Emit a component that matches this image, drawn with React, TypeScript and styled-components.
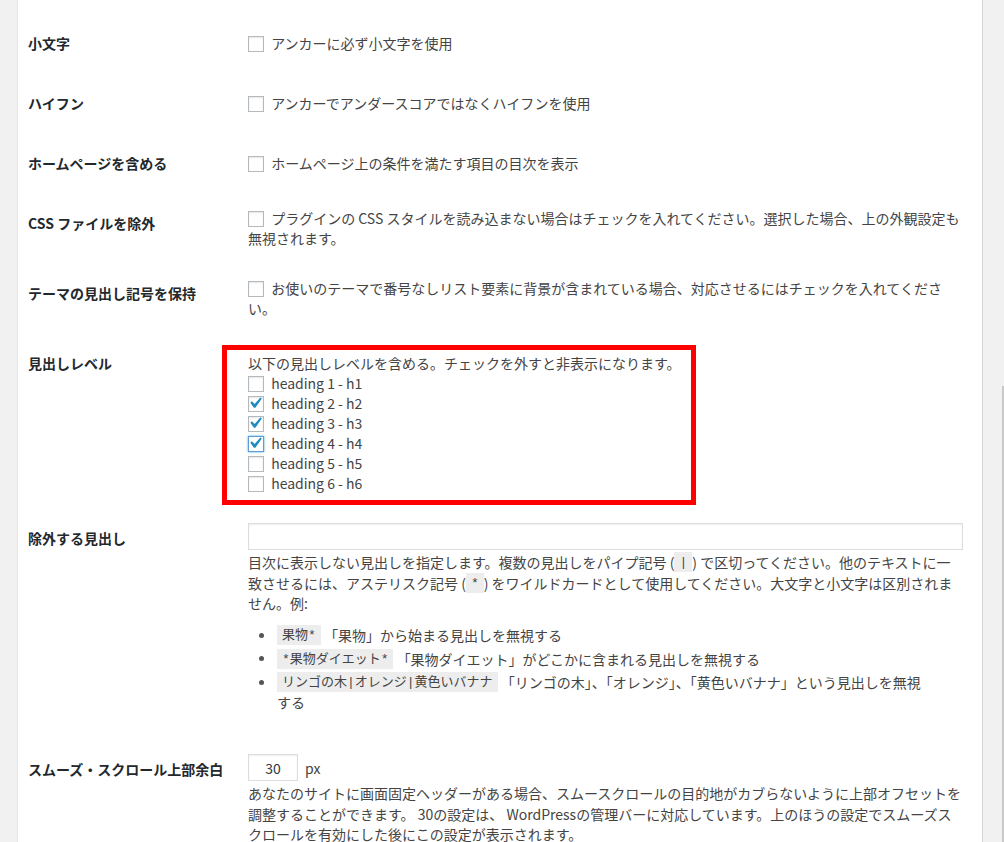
import React from "react";
import styled, { createGlobalStyle } from "styled-components";

const GlobalStyle = createGlobalStyle`
  html, body {
    margin: 0;
    padding: 0;
    height: 842px;
    overflow: hidden;
    background: #f1f1f1;
  }
  body {
    font-family: "Noto Sans CJK JP", "Noto Sans", sans-serif;
    font-size: 14px;
    color: #444;
  }
`;

const Shell = styled.div`
  display: flex;
  height: 842px;
`;

const LeftGutter = styled.div`
  flex: none;
  width: 17px;
  background: #f1f1f1;
  border-right: 1px solid #e5e5e5;
`;

const Panel = styled.main`
  flex: 1;
  background: #fff;
  padding: 13px 19px 0 10px;
  overflow: hidden;
`;

const RightGutter = styled.div`
  flex: none;
  width: 21px;
  background: #f1f1f1;
  border-left: 1px solid #d5d5d5;
  display: flex;
  justify-content: flex-end;
`;

const ScrollEdge = styled.div`
  width: 2px;
  margin-top: 386px;
  background: #c8c8c8;
`;

const Row = styled.div`
  display: grid;
  grid-template-columns: 220px 715px;
`;

const Th = styled.div<{ $top?: number }>`
  padding: ${(p) => p.$top ?? 20}px 0 20px;
  line-height: 20px;
  font-weight: 700;
  color: #23282d;
  white-space: nowrap;
`;

const Td = styled.div<{ $pad?: string; $align?: string }>`
  align-self: ${(p) => p.$align ?? "center"};
  padding: ${(p) => p.$pad ?? "15px 0"};
  line-height: 20px;
  white-space: nowrap;
  position: relative;
`;

const Box = styled.span<{ $checked?: boolean; $focus?: boolean }>`
  display: inline-block;
  position: relative;
  box-sizing: border-box;
  width: 16px;
  height: 16px;
  margin: -3px 4px 0 0;
  vertical-align: middle;
  background: #fff;
  border: 1px solid ${(p) => (p.$focus ? "#5b9dd9" : "#b4b9be")};
  box-shadow: ${(p) =>
    p.$focus
      ? "0 0 2px rgba(30, 140, 190, 0.8)"
      : "inset 0 1px 2px rgba(0, 0, 0, 0.1)"};
  svg {
    position: absolute;
    left: -5px;
    top: -4.5px;
    width: 22px;
    height: 22px;
  }
`;

const Check = ({ checked, focus }: { checked?: boolean; focus?: boolean }) => (
  <Box $checked={checked} $focus={focus}>
    {checked && (
      <svg viewBox="0 0 20 20">
        <path
          fill="#1e8cbe"
          d="M14.83 4.89l1.34.94-5.81 8.38H9.02L5.78 9.67l1.34-1.25 2.57 2.4z"
        />
      </svg>
    )}
  </Box>
);

const Label = styled.label`
  cursor: default;
`;

const Fieldset = styled.div`
  position: relative;
  line-height: 20px;
`;

const Annotation = styled.div`
  position: absolute;
  left: -26px;
  top: -8px;
  width: 474px;
  height: 160px;
  box-sizing: border-box;
  border: 5px solid #ff0000;
  pointer-events: none;
`;

const Input = styled.input<{ $w: number; $center?: boolean }>`
  display: block;
  box-sizing: border-box;
  width: ${(p) => p.$w}px;
  height: 27px;
  margin: 0;
  padding: 3px 5px;
  border: 1px solid #ddd;
  box-shadow: inset 0 1px 2px rgba(0, 0, 0, 0.07);
  background: #fff;
  color: #32373c;
  font-family: "Noto Sans CJK JP", "Noto Sans", sans-serif;
  font-size: 14px;
  text-align: ${(p) => (p.$center ? "center" : "left")};
  outline: none;
`;

const FieldLine = styled.div`
  display: flex;
  align-items: center;
  gap: 7px;
`;

const Unit = styled.span`
  line-height: 20px;
`;

const Desc = styled.p`
  margin: 2px 0 0;
  line-height: 20.5px;
`;

const Code = styled.code`
  display: inline-block;
  vertical-align: top;
  font-family: "Liberation Mono", "Noto Sans CJK JP", monospace;
  font-size: 13px;
  line-height: 15px;
  padding: 3px 5px 2px;
  background: rgba(0, 0, 0, 0.07);
  color: #444;
`;

const List = styled.ul`
  margin: 11.5px 0 12px;
  padding: 0;
  list-style: none;
`;

const Item = styled.li`
  position: relative;
  padding-left: 29px;
  line-height: 20px;
  margin-bottom: 3.5px;
  &:last-child {
    margin-bottom: 0;
  }
  &::before {
    content: "";
    position: absolute;
    left: 11px;
    top: 7.5px;
    width: 5px;
    height: 5px;
    border-radius: 50%;
    background: #555;
  }
`;

const headings = [
  { n: 1, checked: false },
  { n: 2, checked: true },
  { n: 3, checked: true },
  { n: 4, checked: true, focus: true },
  { n: 5, checked: false },
  { n: 6, checked: false },
];

export default function App() {
  return (
    <>
      <GlobalStyle />
      <Shell>
        <LeftGutter />
        <Panel>
          <Row>
            <Th>小文字</Th>
            <Td>
              <Label>
                <Check /> アンカーに必ず小文字を使用
              </Label>
            </Td>
          </Row>
          <Row>
            <Th>ハイフン</Th>
            <Td>
              <Label>
                <Check /> アンカーでアンダースコアではなくハイフンを使用
              </Label>
            </Td>
          </Row>
          <Row>
            <Th>ホームページを含める</Th>
            <Td>
              <Label>
                <Check /> ホームページ上の条件を満たす項目の目次を表示
              </Label>
            </Td>
          </Row>
          <Row>
            <Th>CSS ファイルを除外</Th>
            <Td>
              <Label>
                <Check />{" "}
                プラグインの CSS スタイルを読み込まない場合はチェックを入れてください。選択した場合、上の外観設定も
                <br />
                無視されます。
              </Label>
            </Td>
          </Row>
          <Row>
            <Th>テーマの見出し記号を保持</Th>
            <Td>
              <Label>
                <Check />{" "}
                お使いのテーマで番号なしリスト要素に背景が含まれている場合、対応させるにはチェックを入れてくださ
                <br />
                い。
              </Label>
            </Td>
          </Row>
          <Row>
            <Th>見出しレベル</Th>
            <Td $align="start" $pad="20px 0 14px">
              <Fieldset>
                <Annotation />
                以下の見出しレベルを含める。チェックを外すと非表示になります。
                {headings.map((h) => (
                  <React.Fragment key={h.n}>
                    <br />
                    <Label>
                      <Check checked={h.checked} focus={h.focus} /> heading{" "}
                      {h.n} - h{h.n}
                    </Label>
                  </React.Fragment>
                ))}
              </Fieldset>
            </Td>
          </Row>
          <Row>
            <Th $top={21}>除外する見出し</Th>
            <Td $align="start" $pad="16px 0 15px">
              <Input $w={715} type="text" defaultValue="" />
              <Desc>
                目次に表示しない見出しを指定します。複数の見出しをパイプ記号 (
                <Code>|</Code>) で区切ってください。他のテキストに一
                <br />
                致させるには、アステリスク記号 (<Code>*</Code>)
                をワイルドカードとして使用してください。大文字と小文字は区別されま
                <br />
                せん。例:
              </Desc>
              <List>
                <Item>
                  <Code>果物*</Code> 「果物」から始まる見出しを無視する
                </Item>
                <Item>
                  <Code>*果物ダイエット*</Code>{" "}
                  「果物ダイエット」がどこかに含まれる見出しを無視する
                </Item>
                <Item>
                  <Code>リンゴの木|オレンジ|黄色いバナナ</Code>{" "}
                  「リンゴの木」、「オレンジ」、「黄色いバナナ」という見出しを無視
                  <br />
                  する
                </Item>
              </List>
            </Td>
          </Row>
          <Row>
            <Th>スムーズ・スクロール上部余白</Th>
            <Td $align="start" $pad="15px 0">
              <FieldLine>
                <Input $w={50} $center type="text" defaultValue="30" />
                <Unit>px</Unit>
              </FieldLine>
              <Desc>
                あなたのサイトに画面固定ヘッダーがある場合、スムースクロールの目的地がカブらないように上部オフセットを
                <br />
                調整することができます。 30の設定は、
                WordPressの管理バーに対応しています。上のほうの設定でスムーズス
                <br />
                クロールを有効にした後にこの設定が表示されます。
              </Desc>
            </Td>
          </Row>
        </Panel>
        <RightGutter>
          <ScrollEdge />
        </RightGutter>
      </Shell>
    </>
  );
}
